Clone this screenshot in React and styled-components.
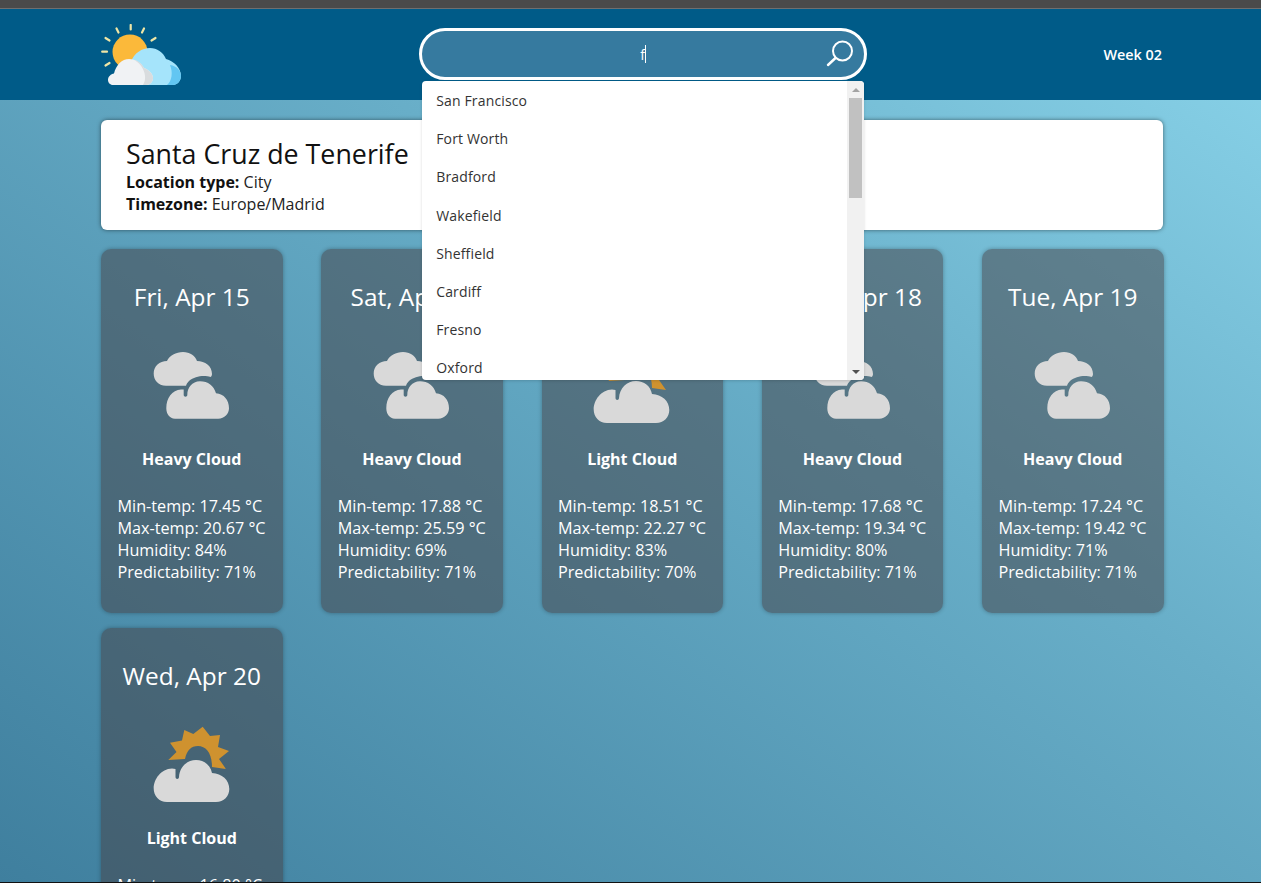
import React from 'react';
import styled, { createGlobalStyle } from 'styled-components';

const GlobalStyle = createGlobalStyle`
    html, body {
        margin: 0;
        padding: 0;
        height: 100%;
        overflow: hidden;
    }
    body {
        font-family: "Open Sans", "Noto Sans", sans-serif;
    }
`;

const Page = styled.div`
    height: 883px;
    box-sizing: border-box;
    overflow: hidden;
    border-bottom: solid 1px #111;
    background: linear-gradient(to top right, #3f7f9e 0%, #68aec8 60%, #8ad4ea 100%);
`;

const BrowserEdge = styled.div`
    height: 8px;
    background: #4a4a4a;
    border-bottom: solid 1px #6f6f6f;
`;

const Header = styled.header`
    height: 91px;
    box-sizing: border-box;
    padding: 0 99px 0 101px;
    background: #005b88;
    display: flex;
    align-items: center;
    justify-content: space-between;
`;

const Logo = styled.svg`
    width: 82px;
    height: 62px;
    display: block;
`;

const SearchWrapper = styled.div`
    position: relative;
    width: 448px;
    margin-bottom: 1px;
`;

const SearchBar = styled.div`
    height: 52px;
    box-sizing: border-box;
    border: solid 3px #fff;
    border-radius: 26px;
    background: #367a9f;
    position: relative;
    display: flex;
    align-items: center;
    justify-content: center;
    color: #fff;
    font-size: 14px;
`;

const Caret = styled.span`
    display: inline-block;
    width: 1px;
    height: 18px;
    background: #fff;
`;

const SearchIcon = styled.svg`
    position: absolute;
    right: 10px;
    top: 9px;
    width: 28px;
    height: 28px;
`;

const Dropdown = styled.div`
    position: absolute;
    top: 53px;
    left: 3px;
    width: 442px;
    height: 299px;
    background: #fff;
    border-radius: 4px;
    overflow: hidden;
    display: flex;
    z-index: 5;
    box-shadow: 0 1px 3px rgba(0, 0, 0, 0.15);
`;

const OptionList = styled.ul`
    flex: 1;
    list-style: none;
    margin: 0;
    padding: 0.4px 0 0;
`;

const Option = styled.li`
    height: 38.2px;
    padding-left: 14px;
    display: flex;
    align-items: center;
    font-size: 14px;
    color: #333;
    letter-spacing: 0.15px;
`;

const ScrollTrack = styled.div`
    width: 17px;
    background: #f1f1f1;
    position: relative;
`;

const ScrollThumb = styled.div`
    position: absolute;
    top: 17px;
    left: 2px;
    width: 13px;
    height: 100px;
    background: #c1c1c1;
`;

const ArrowUp = styled.div`
    position: absolute;
    top: 7px;
    left: 5px;
    border: solid 4px transparent;
    border-top: 0;
    border-bottom: solid 4px #a3a3a3;
`;

const ArrowDown = styled.div`
    position: absolute;
    bottom: 6px;
    left: 5px;
    border: solid 4px transparent;
    border-bottom: 0;
    border-top: solid 4px #505050;
`;

const WeekLabel = styled.div`
    color: #fff;
    font-size: 14.4px;
    font-weight: 600;
`;

const Main = styled.main`
    padding: 20px 97.5px 0 101px;
`;

const InfoCard = styled.section`
    height: 110px;
    box-sizing: border-box;
    padding: 17px 25px 0;
    background: #fff;
    border-radius: 6px;
    box-shadow: 0 0 4px rgba(0, 0, 0, 0.5);
    color: #222;
    font-size: 16px;
    line-height: 22px;
    margin: 0 0.5px 19px 0;
`;

const CityName = styled.h1`
    margin: 0;
    font-size: 26.8px;
    font-weight: 400;
    line-height: 34px;
    color: #111;
`;

const InfoLine = styled.div`
    b {
        font-weight: 700;
        color: #111;
    }
`;

const CardGrid = styled.div`
    display: grid;
    grid-template-columns: repeat(5, 181.5px);
    justify-content: space-between;
    row-gap: 15px;
`;

const DayCard = styled.article`
    height: 364px;
    box-sizing: border-box;
    padding: 31px 0 0;
    border-radius: 10px;
    background: rgba(67, 61, 65, 0.5);
    box-shadow: 0 0 4px rgba(0, 0, 0, 0.3);
    color: #fff;
    text-align: center;
`;

const DayTitle = styled.h2`
    margin: 0;
    font-size: 24.4px;
    font-weight: 400;
    line-height: 34px;
`;

const IconBox = styled.div`
    height: 88px;
    margin-top: 24px;
    display: flex;
    justify-content: center;
    align-items: center;
`;

const WeatherName = styled.div`
    margin-top: 22px;
    font-size: 16px;
    font-weight: 700;
    line-height: 22px;
`;

const Stats = styled.div`
    margin-top: 25px;
    padding-left: 16.5px;
    text-align: left;
    font-size: 16.2px;
    line-height: 22px;
`;

const HeavyCloud = () => (
    <svg width="84" height="88" viewBox="0 0 84 88">
        <path
            d="M16 47.7 C8 47.7 3.7 42 3.7 35.5 C3.7 28 9.5 23 17 23 C19.5 17.5 26 14 33 14 C40 14 45 17.5 47 23 C55 23 62 28 62 36 C62 37 61.5 38.5 60.5 39 C55 37 45 37.5 39 43 C37.5 44.5 36.5 46 36 47.7 Z"
            fill="#d9d9d9"
        />
        <path
            d="M25 80.7 C19.5 80.7 16.3 76 16.3 70.3 C16.3 60 22 52 31 51.5 L33.7 51.5 L33.7 57 C33.7 59.3 37.3 59.3 37.3 57 C37.3 50 42 43.3 50 43.3 C58 43.3 64 48 66 55.3 C74 56 79 62 79 70.3 C79 76 74.5 80.7 68.3 80.7 Z"
            fill="#d9d9d9"
        />
    </svg>
);

const LightCloud = () => (
    <svg width="84" height="88" viewBox="0 0 84 88">
        <path
            d="M18.3 43 L26.5 35 L20 25.7 L32 23.5 L34.3 13 L43.3 17 L52.7 9.7 L60 19 L70 18 L68 30 L79 34 L69 42 L76 52 L62 50 C62 36 56 29 48 29 C41 29 37 33 35 42 Z"
            fill="#cf922f"
        />
        <path
            d="M17 85 C9 85 3.7 79 3.7 71.5 C3.7 62 11 52 22 51.5 L25.5 52 L25.5 60 C25.5 62.5 29 62.5 29 60 C29.5 50 37 43 46 43 C54 43 60.5 48 62 56 C72 56.5 79.3 63 79.3 72 C79.3 79 74 85 66 85 Z"
            fill="#d9d9d9"
        />
    </svg>
);

const days = [
    { date: 'Fri, Apr 15', kind: 'Heavy Cloud', min: '17.45', max: '20.67', hum: 84, pred: 71 },
    { date: 'Sat, Apr 16', kind: 'Heavy Cloud', min: '17.88', max: '25.59', hum: 69, pred: 71 },
    { date: 'Sun, Apr 17', kind: 'Light Cloud', min: '18.51', max: '22.27', hum: 83, pred: 70 },
    { date: 'Mon, Apr 18', kind: 'Heavy Cloud', min: '17.68', max: '19.34', hum: 80, pred: 71 },
    { date: 'Tue, Apr 19', kind: 'Heavy Cloud', min: '17.24', max: '19.42', hum: 71, pred: 71 },
    { date: 'Wed, Apr 20', kind: 'Light Cloud', min: '16.80', max: '21.03', hum: 72, pred: 71 },
];

const cities = ['San Francisco', 'Fort Worth', 'Bradford', 'Wakefield', 'Sheffield', 'Cardiff', 'Fresno', 'Oxford'];

const App = () => (
    <Page>
        <GlobalStyle />
        <BrowserEdge />
        <Header>
            <Logo viewBox="0 0 82 62">
                <g stroke="#efe6a6" strokeWidth="2.2" strokeLinecap="round">
                    <line x1="29.7" y1="1" x2="29.7" y2="5.5" />
                    <line x1="15.5" y1="4.5" x2="17.5" y2="8.5" />
                    <line x1="43" y1="4.5" x2="41" y2="8.5" />
                    <line x1="4.5" y1="14" x2="8.5" y2="16.5" />
                    <line x1="54.5" y1="14" x2="50.5" y2="16.5" />
                    <line x1="1.2" y1="27.7" x2="6" y2="27.7" />
                    <line x1="4.5" y1="41.5" x2="8.5" y2="39" />
                </g>
                <circle cx="29" cy="28" r="17.5" fill="#fbb93a" />
                <path d="M30 61 L30 38 C33 29 41 24 49 24 C56 24 62 28 65 35 C73 37 80 44 80 52 C80 57 76 61 72 61 Z" fill="#a5e4fb" />
                <path d="M69 41 C76 42 80 47 80 52 C80 57 76 61 72 61 L66 61 C71 57 72 48 69 41 Z" fill="#62c6f2" />
                <path d="M12 61 C9 61 7 58.5 7 56 C7 52.5 10 50 13 49.5 C15 41 21 35 28 35 C35 35 40 39 43 44 C48 46 52 50 52 54 C52 58 49 61 45 61 Z" fill="#f0f2f4" />
                <path d="M33 36 C38 37 41 40 43 44 C48 46 52 50 52 54 C52 58 49 61 45 61 L42 61 C47 54 43 41 33 36 Z" fill="#d9dcde" />
            </Logo>
            <SearchWrapper>
                <SearchBar>
                    f<Caret />
                    <SearchIcon viewBox="0 0 28 28" fill="none" stroke="#fff" strokeWidth="2">
                        <circle cx="16.5" cy="11" r="9.5" />
                        <line x1="9.5" y1="18" x2="2" y2="25" strokeWidth="2.4" strokeLinecap="round" />
                    </SearchIcon>
                </SearchBar>
                <Dropdown>
                    <OptionList>
                        {cities.map((city) => (
                            <Option key={city}>{city}</Option>
                        ))}
                    </OptionList>
                    <ScrollTrack>
                        <ArrowUp />
                        <ScrollThumb />
                        <ArrowDown />
                    </ScrollTrack>
                </Dropdown>
            </SearchWrapper>
            <WeekLabel>Week 02</WeekLabel>
        </Header>
        <Main>
            <InfoCard>
                <CityName>Santa Cruz de Tenerife</CityName>
                <InfoLine><b>Location type:</b> City</InfoLine>
                <InfoLine><b>Timezone:</b> Europe/Madrid</InfoLine>
            </InfoCard>
            <CardGrid>
                {days.map((day) => (
                    <DayCard key={day.date}>
                        <DayTitle>{day.date}</DayTitle>
                        <IconBox>
                            {day.kind === 'Heavy Cloud' ? <HeavyCloud /> : <LightCloud />}
                        </IconBox>
                        <WeatherName>{day.kind}</WeatherName>
                        <Stats>
                            <div>Min-temp: {day.min} °C</div>
                            <div>Max-temp: {day.max} °C</div>
                            <div>Humidity: {day.hum}%</div>
                            <div>Predictability: {day.pred}%</div>
                        </Stats>
                    </DayCard>
                ))}
            </CardGrid>
        </Main>
    </Page>
);

export default App;
